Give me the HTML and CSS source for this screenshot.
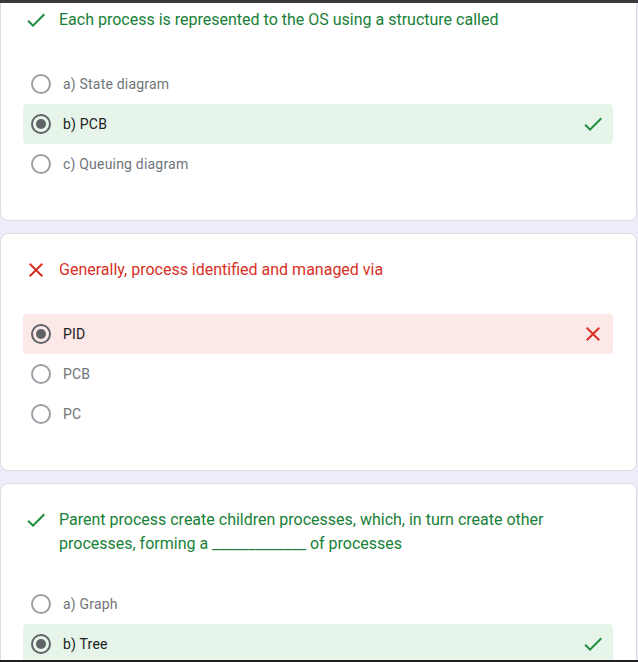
FILE: index.html
```html
<!DOCTYPE html>
<html lang="en">
<head>
<meta charset="utf-8">
<title>Quiz results</title>
<link rel="stylesheet" href="styles.css">
</head>
<body>
<div class="frame-top"></div>
<main class="list">
  <section class="card">
    <div class="question correct">
      <svg class="q-icon" viewBox="0 0 24 24"><path d="M9 16.17L4.83 12l-1.42 1.41L9 19 21 7l-1.41-1.41z"/></svg>
      <p class="q-text">Each process is represented to the OS using a structure called</p>
    </div>
    <div class="options">
      <div class="option"><span class="radio"></span><span class="label">a) State diagram</span></div>
      <div class="option selected right"><span class="radio on"></span><span class="label">b) PCB</span>
        <svg class="mark ok" viewBox="0 0 24 24"><path d="M9 16.17L4.83 12l-1.42 1.41L9 19 21 7l-1.41-1.41z"/></svg></div>
      <div class="option"><span class="radio"></span><span class="label">c) Queuing diagram</span></div>
    </div>
  </section>

  <section class="card">
    <div class="question wrong">
      <svg class="q-icon" viewBox="0 0 24 24"><path d="M19 6.41L17.59 5 12 10.59 6.41 5 5 6.41 10.59 12 5 17.59 6.41 19 12 13.41 17.59 19 19 17.59 13.41 12z"/></svg>
      <p class="q-text">Generally, process identified and managed via</p>
    </div>
    <div class="options">
      <div class="option selected bad"><span class="radio on"></span><span class="label">PID</span>
        <svg class="mark no" viewBox="0 0 24 24"><path d="M19 6.41L17.59 5 12 10.59 6.41 5 5 6.41 10.59 12 5 17.59 6.41 19 12 13.41 17.59 19 19 17.59 13.41 12z"/></svg></div>
      <div class="option"><span class="radio"></span><span class="label">PCB</span></div>
      <div class="option"><span class="radio"></span><span class="label">PC</span></div>
    </div>
  </section>

  <section class="card">
    <div class="question correct multi">
      <svg class="q-icon" viewBox="0 0 24 24"><path d="M9 16.17L4.83 12l-1.42 1.41L9 19 21 7l-1.41-1.41z"/></svg>
      <p class="q-text">Parent process create children processes, which, in turn create other processes, forming a _____________ of processes</p>
    </div>
    <div class="options">
      <div class="option"><span class="radio"></span><span class="label">a) Graph</span></div>
      <div class="option selected right"><span class="radio on"></span><span class="label">b) Tree</span>
        <svg class="mark ok" viewBox="0 0 24 24"><path d="M9 16.17L4.83 12l-1.42 1.41L9 19 21 7l-1.41-1.41z"/></svg></div>
    </div>
  </section>
</main>
<div class="frame-bottom"></div>
</body>
</html>
```

FILE: styles.css
```css
html, body {
  margin: 0;
  padding: 0;
}
body {
  background: #f0ebf8;
  font-family: Roboto, "Liberation Sans", Arial, sans-serif;
  overflow: hidden;
  height: 662px;
}
.frame-top {
  position: fixed;
  top: 0;
  left: 0;
  right: 0;
  height: 3px;
  background: #3a3a3a;
  z-index: 5;
}
.frame-bottom {
  position: fixed;
  bottom: 0;
  left: 0;
  right: 0;
  height: 2px;
  background: #202020;
  z-index: 5;
}
.list {
  display: flex;
  flex-direction: column;
  gap: 12px;
  margin-top: -17px;
  width: 637px;
}
.card {
  box-sizing: border-box;
  background: #fff;
  border: 1px solid #dadce0;
  border-radius: 8px;
  padding: 24px 23px 36px 22px;
}
.question {
  display: flex;
  align-items: flex-start;
  gap: 11px;
  margin-bottom: 32px;
  padding-right: 24px;
}
.question.multi {
  margin-bottom: 28px;
}
.q-icon {
  width: 24px;
  height: 24px;
  flex: none;
  margin-left: 1px;
}
.q-text {
  margin: 0;
  font-size: 16px;
  line-height: 24px;
}
.correct .q-text { color: #188038; }
.correct .q-icon { fill: #1e8e3e; }
.wrong .q-text { color: #d93025; }
.wrong .q-icon { fill: #d93025; }

.options {
  display: flex;
  flex-direction: column;
}
.option {
  display: flex;
  align-items: center;
  height: 40px;
  padding: 0 8px;
  border-radius: 4px;
}
.option.selected.right { background: #e6f4ea; }
.option.selected.bad { background: #fce8e6; }
.radio {
  box-sizing: border-box;
  width: 20px;
  height: 20px;
  border-radius: 50%;
  border: 2px solid #9aa0a6;
  flex: none;
  display: flex;
  align-items: center;
  justify-content: center;
}
.radio.on {
  border-color: #5f6368;
}
.radio.on::after {
  content: "";
  width: 10px;
  height: 10px;
  border-radius: 50%;
  background: #5f6368;
}
.label {
  margin-left: 12px;
  font-size: 14px;
  line-height: 20px;
  color: #70757a;
  letter-spacing: 0.2px;
}
.selected .label { color: #202124; }
.mark {
  width: 24px;
  height: 24px;
  margin-left: auto;
  flex: none;
}
.mark.ok { fill: #1e8e3e; }
.mark.no { fill: #d93025; }
```
